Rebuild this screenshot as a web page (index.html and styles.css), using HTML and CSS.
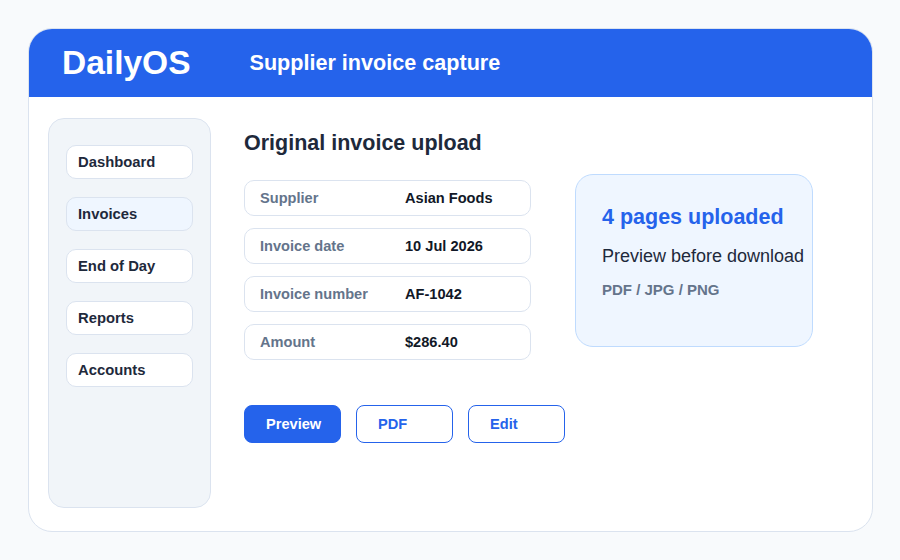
FILE: index.html
```html
<!DOCTYPE html>
<html lang="en">
<head>
<meta charset="utf-8">
<title>DailyOS - Supplier invoice capture</title>
<link rel="stylesheet" href="styles.css">
</head>
<body>
<div class="app">
  <header class="topbar">
    <div class="brand">DailyOS</div>
    <div class="page-title">Supplier invoice capture</div>
  </header>
  <div class="body">
    <nav class="sidebar">
      <div class="nav-item">Dashboard</div>
      <div class="nav-item active">Invoices</div>
      <div class="nav-item">End of Day</div>
      <div class="nav-item">Reports</div>
      <div class="nav-item">Accounts</div>
    </nav>
    <main class="main">
      <section class="left">
        <h1 class="heading">Original invoice upload</h1>
        <div class="fields">
          <div class="field"><span class="label">Supplier</span><span class="value">Asian Foods</span></div>
          <div class="field"><span class="label">Invoice date</span><span class="value">10 Jul 2026</span></div>
          <div class="field"><span class="label">Invoice number</span><span class="value">AF-1042</span></div>
          <div class="field"><span class="label">Amount</span><span class="value">$286.40</span></div>
        </div>
        <div class="actions">
          <button class="btn primary">Preview</button>
          <button class="btn outline">PDF</button>
          <button class="btn outline">Edit</button>
        </div>
      </section>
      <aside class="upload-card">
        <div class="upload-title">4 pages uploaded</div>
        <div class="upload-sub">Preview before download</div>
        <div class="upload-types">PDF / JPG / PNG</div>
      </aside>
    </main>
  </div>
</div>
</body>
</html>
```

FILE: styles.css
```css
* { box-sizing: border-box; }
html, body { margin: 0; padding: 0; }
body {
  background: #f8fafc;
  font-family: "Liberation Sans", Arial, sans-serif;
  color: #1e293b;
  width: 900px;
  height: 560px;
  overflow: hidden;
}
.app {
  margin: 28px 0 0 28px;
  width: 845px;
  height: 504px;
  background: #ffffff;
  border: 1px solid #dbe3ef;
  border-radius: 24px;
  overflow: hidden;
  display: flex;
  flex-direction: column;
}
.topbar {
  height: 68px;
  flex: none;
  background: #2563eb;
  color: #ffffff;
  display: flex;
  align-items: center;
  padding-left: 33px;
  gap: 59px;
  font-weight: bold;
}
.brand { font-size: 33.5px; line-height: 40px; }
.page-title { font-size: 21.6px; line-height: 26px; }
.body {
  flex: 1;
  display: flex;
  padding: 21px 19px 23px 19px;
}
.sidebar {
  width: 163px;
  flex: none;
  background: #f1f5f9;
  border: 1px solid #dbe3ef;
  border-radius: 16px;
  padding: 26px 17px;
  display: flex;
  flex-direction: column;
  gap: 18px;
}
.nav-item {
  height: 34px;
  background: #ffffff;
  border: 1px solid #dbe3ef;
  border-radius: 10px;
  padding-left: 11px;
  display: flex;
  align-items: center;
  font-size: 14.8px;
  font-weight: bold;
  color: #1e293b;
}
.nav-item.active { background: #eff6ff; }
.main {
  display: flex;
  margin-left: 33px;
  gap: 44px;
  align-items: flex-start;
}
.left {
  width: 287px;
  flex: none;
  display: flex;
  flex-direction: column;
}
.heading {
  margin: 12px 0 0 0;
  font-size: 21.5px;
  line-height: 26px;
  font-weight: bold;
  color: #1e293b;
}
.fields {
  margin-top: 24px;
  display: flex;
  flex-direction: column;
  gap: 12px;
}
.field {
  height: 36px;
  border: 1px solid #dbe3ef;
  border-radius: 10px;
  display: flex;
  align-items: center;
  padding-left: 15px;
  padding-bottom: 1px;
  font-size: 14.6px;
  font-weight: bold;
}
.label { width: 145px; flex: none; color: #64748b; }
.value { color: #111827; }
.actions {
  margin-top: 45px;
  display: flex;
  gap: 15px;
}
.btn {
  flex: none;
  height: 38px;
  width: 97px;
  border-radius: 8px;
  font-family: inherit;
  font-size: 14.6px;
  font-weight: bold;
  text-align: left;
  padding: 0 0 0 21px;
  cursor: pointer;
}
.btn.primary {
  background: #2563eb;
  border: 1px solid #2563eb;
  color: #ffffff;
}
.btn.outline {
  background: #ffffff;
  border: 1px solid #2563eb;
  color: #2563eb;
}
.upload-card {
  flex: none;
  margin-top: 56px;
  width: 238px;
  height: 173px;
  background: #eff6ff;
  border: 1px solid #bfdbfe;
  border-radius: 18px;
  padding: 29px 0 0 26px;
}
.upload-title {
  font-size: 21.5px;
  line-height: 26px;
  font-weight: bold;
  color: #2563eb;
}
.upload-sub {
  margin-top: 15px;
  font-size: 18px;
  line-height: 22px;
  color: #1e293b;
  white-space: nowrap;
}
.upload-types {
  margin-top: 14px;
  font-size: 15px;
  line-height: 18px;
  font-weight: bold;
  color: #64748b;
}
```
